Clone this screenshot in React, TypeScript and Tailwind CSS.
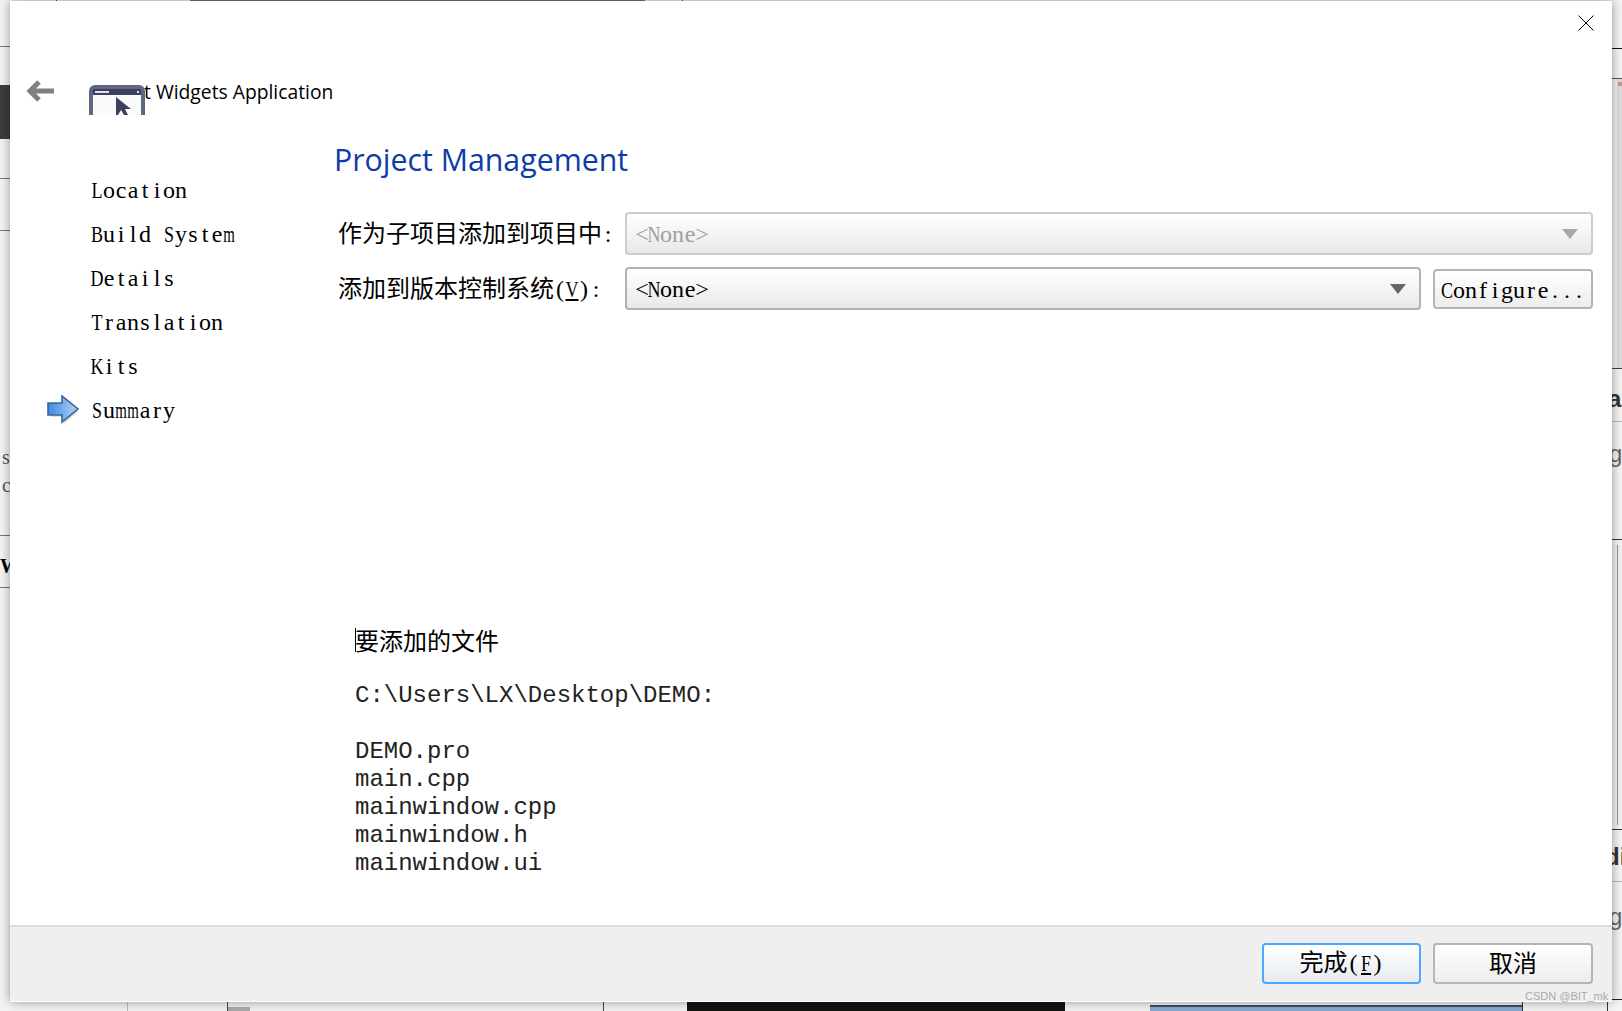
import React from 'react';

const cjk = "font-['Noto_Sans_CJK_SC',sans-serif] text-[24px] leading-[32px]";

const steps = ['Location', 'Build System', 'Details', 'Translation', 'Kits', 'Summary'];
const files = ['DEMO.pro', 'main.cpp', 'mainwindow.cpp', 'mainwindow.h', 'mainwindow.ui'];

// half-width latin like the dialog's Song font: every character gets a 12px cell
function cellClass(ch: string) {
  if (ch === 'm') return 'scale-x-[0.62]';
  if (ch === 'w') return 'scale-x-[0.7]';
  if (/[A-Z]/.test(ch)) return 'scale-x-75';
  return '';
}

function Sim({ text, underline }: { text: string; underline?: boolean }) {
  return (
    <span className="font-['Liberation_Serif',serif] text-[24px]">
      {Array.from(text).map((ch, i) => (
        <span
          key={i}
          className={`inline-flex w-[12px] justify-center whitespace-pre ${underline ? 'underline' : ''} ${cellClass(ch)}`}
        >
          {ch}
        </span>
      ))}
    </span>
  );
}

function Caret({ color }: { color: string }) {
  return (
    <svg width="16" height="10" viewBox="0 0 16 10" className="shrink-0">
      <polygon points="0,0 16,0 8,10" fill={color} />
    </svg>
  );
}

function BackArrow() {
  return (
    <svg width="28" height="22" viewBox="0 0 28 22" className="mt-[79px] shrink-0">
      <path d="M28 11H5M13 2 4 11l9 9" fill="none" stroke="#808080" strokeWidth="5" />
    </svg>
  );
}

function WizardIcon() {
  return (
    <svg width="56" height="30" viewBox="0 0 56 30" className="relative mt-[84px] ml-[35px] shrink-0">
      <path d="M0 30V6a6 6 0 0 1 6-6h44a6 6 0 0 1 6 6v24z" fill="#5f6780" />
      <rect x="4" y="4" width="48" height="26" fill="#fafafa" />
      <rect x="4" y="4" width="48" height="6" fill="#3b4060" />
      <rect x="6" y="6" width="14" height="2" fill="#e4e4e8" />
      <rect x="48" y="6" width="2" height="2" fill="#e4e4e8" />
      <path d="M27 12v18h2l3-5 3 5h4l-3-6h6z" fill="#3b4060" />
    </svg>
  );
}

function CurrentArrow() {
  return (
    <svg width="34" height="30" viewBox="0 0 34 30" className="block">
      <defs>
        <linearGradient id="cur" x1="0" x2="1" y1="0" y2="0">
          <stop offset="0" stopColor="#3f8ae8" />
          <stop offset="1" stopColor="#b4d2f5" />
        </linearGradient>
      </defs>
      <path d="M3 10h13V3l14 12-14 12v-7H3z" fill="#000" opacity="0.12" transform="translate(1 2)" />
      <path d="M1 8h14V1l16 13-16 13v-7H1z" fill="url(#cur)" stroke="#3a6496" strokeWidth="1.6" />
    </svg>
  );
}

function Backdrop() {
  return (
    <>
      <div className="absolute left-[190px] top-0 h-px w-[455px] bg-[#777]" />
      <div className="absolute left-[56px] top-0 h-px w-px bg-[#444]" />
      <div className="absolute left-[682px] top-0 h-px w-px bg-[#444]" />
      {[46, 178, 230, 535, 587].map((y) => (
        <div key={y} className="absolute left-0 h-px w-[10px] bg-[#777]" style={{ top: y }} />
      ))}
      <div className="absolute left-0 top-[85px] h-[54px] w-[10px] bg-[#3c3c3c]" />
      <span className="absolute left-[2px] top-[447px] font-['Liberation_Serif',serif] text-[20px] leading-[20px] text-[#555]">s</span>
      <span className="absolute left-[2px] top-[475px] font-['Liberation_Serif',serif] text-[20px] leading-[20px] text-[#555]">c</span>
      <span className="absolute left-0 top-[556px] font-['Liberation_Serif',serif] text-[20px] font-bold leading-[20px] text-black">W</span>

      {[
        { y: 48, c: '#111' },
        { y: 78, c: '#555' },
        { y: 368, c: '#444' },
        { y: 421, c: '#bbb' },
        { y: 539, c: '#333' },
        { y: 829, c: '#333' },
        { y: 881, c: '#bbb' },
        { y: 999, c: '#222' },
      ].map((l) => (
        <div key={l.y} className="absolute left-[1612px] h-px w-[10px]" style={{ top: l.y, background: l.c }} />
      ))}
      <div className="absolute left-[1617px] top-[79px] h-[289px] w-[5px] bg-[#dcdcdc]" />
      <div className="absolute left-[1618px] top-[82px] h-[4px] w-[4px] bg-[#c09a9a]" />
      <div className="absolute left-[1617px] top-[545px] h-[280px] w-[5px] border-l border-[#999] bg-[#f2f2f2]" />
      <span className="absolute left-[1608px] top-[386px] font-['Liberation_Sans',sans-serif] text-[24px] font-bold leading-[26px] text-[#333]">a</span>
      <span className="absolute left-[1609px] top-[441px] font-['Liberation_Sans',sans-serif] text-[24px] leading-[26px] text-[#666]">g</span>
      <span className="absolute left-[1605px] top-[844px] font-['Liberation_Sans',sans-serif] text-[24px] font-bold leading-[26px] text-[#333]">di</span>
      <span className="absolute left-[1609px] top-[904px] font-['Liberation_Sans',sans-serif] text-[24px] leading-[26px] text-[#666]">g</span>

      <div className="absolute left-[127px] top-[1002px] h-[9px] w-px bg-[#bbb]" />
      <div className="absolute left-[227px] top-[1002px] h-[9px] w-px bg-[#444]" />
      <div className="absolute left-[228px] top-[1007px] h-[4px] w-[22px] bg-[#aaa]" />
      <div className="absolute left-[603px] top-[1002px] h-[9px] w-px bg-[#444]" />
      <div className="absolute left-[687px] top-[1002px] h-[9px] w-[378px] bg-[#14130f]" />
      <div className="absolute left-[1150px] top-[1005px] h-[6px] w-[372px] border-t-2 border-[#3f4d66] bg-[#8aa8d0]" />
      <div className="absolute left-[1522px] top-[1002px] h-[9px] w-px bg-[#333]" />
      <div className="absolute left-[1607px] top-[1002px] h-[9px] w-px bg-[#333]" />
    </>
  );
}

export default function App() {
  return (
    <div className="relative h-[1011px] w-[1622px] overflow-hidden bg-[#f4f4f4]">
      <Backdrop />

      <div className="absolute left-[10px] top-[1px] flex h-[1001px] w-[1602px] flex-col border-b border-white bg-white shadow-[0_0_10px_rgba(0,0,0,0.4)]">
        <button className="absolute left-[1568px] top-[14px]">
          <svg width="16" height="16" viewBox="0 0 16 16" className="block">
            <path d="M.5.5l15 15M15.5.5l-15 15" stroke="#000" strokeWidth="1" fill="none" />
          </svg>
        </button>

        <header className="flex h-[114px] shrink-0 items-start pl-[16px]">
          <BackArrow />
          <WizardIcon />
          <span className="ml-[-16px] mt-[75px] font-['Open_Sans',sans-serif] text-[19.3px] leading-[32px] text-black">
            Qt Widgets Application
          </span>
        </header>

        <div className="flex min-h-0 flex-1">
          <nav className="w-[324px] shrink-0 pt-[53px]">
            {steps.map((s) => (
              <div key={s} className="flex h-[44px] items-center text-black">
                <div className="w-[81px] shrink-0 pl-[37px]">{s === 'Summary' && <CurrentArrow />}</div>
                <Sim text={s} />
              </div>
            ))}
          </nav>

          <main className="flex min-w-0 flex-1 flex-col pr-[19px]">
            <h1 className="mt-[25px] h-[40px] font-['Open_Sans',sans-serif] text-[30.3px] leading-[40px] text-[#0d3ca8]">
              Project Management
            </h1>

            <div className="mt-[32px] flex flex-col gap-[12px]">
              <div className="flex items-center">
                <label className={`w-[291px] shrink-0 pb-[2px] pl-[4px] text-black ${cjk}`}>
                  作为子项目添加到项目中<Sim text=":" />
                </label>
                <div className="flex h-[43px] flex-1 items-center justify-between rounded-[4px] border-2 border-[#cdcdcd] bg-gradient-to-b from-white to-[#e9e9e9] pl-[9px] pr-[13px]">
                  <span className="text-[#a0a0a0]"><Sim text="<None>" /></span>
                  <Caret color="#a8a8a8" />
                </div>
              </div>
              <div className="flex items-center">
                <label className={`w-[291px] shrink-0 pb-[2px] pl-[4px] text-black ${cjk}`}>
                  添加到版本控制系统<Sim text="(" /><Sim text="V" underline /><Sim text="):" />
                </label>
                <div className="flex h-[43px] flex-1 items-center justify-between rounded-[4px] border-2 border-[#b2b2b2] bg-gradient-to-b from-white to-[#e9e9e9] pl-[9px] pr-[13px]">
                  <span className="text-black"><Sim text="<None>" /></span>
                  <Caret color="#666666" />
                </div>
                <button className="ml-[12px] h-[40px] w-[160px] shrink-0 rounded-[4px] border-2 border-[#b5b5b5] bg-gradient-to-b from-white to-[#ededed] pt-[3px] leading-[32px] text-black">
                  <Sim text="Configure..." />
                </button>
              </div>
            </div>

            <div className="relative mt-[314px] pl-[21px] text-black">
              <div className="absolute left-[21px] top-[4px] h-[24px] w-px bg-black" />
              <p className={cjk}>要添加的文件</p>
              <div className="mt-[26px] font-['Liberation_Mono',monospace] text-[24px] leading-[28px] text-[#222]">
                <p>C:\Users\LX\Desktop\DEMO:</p>
                <p>&nbsp;</p>
                {files.map((f) => (
                  <p key={f}>{f}</p>
                ))}
              </div>
            </div>
          </main>
        </div>

        <footer className="flex h-[76px] shrink-0 justify-end gap-[12px] border-t-2 border-[#dddddd] bg-[#efefef] pr-[19px] pt-[16px]">
          <button className={`h-[41px] w-[159px] rounded-[4px] border-2 border-[#4aa8ff] bg-gradient-to-b from-white to-[#e6ebf0] pb-[3px] text-black ${cjk}`}>
            完成<Sim text="(" /><Sim text="F" underline /><Sim text=")" />
          </button>
          <button className={`h-[41px] w-[160px] rounded-[4px] border-2 border-[#b5b5b5] bg-gradient-to-b from-white to-[#ededed] pb-[3px] text-black ${cjk}`}>
            取消
          </button>
        </footer>

        <span className="absolute left-[1515px] top-[988px] font-['Liberation_Sans',sans-serif] text-[11px] leading-[14px] text-[#aaaaaa]">
          CSDN @BIT_mk
        </span>
      </div>
    </div>
  );
}
